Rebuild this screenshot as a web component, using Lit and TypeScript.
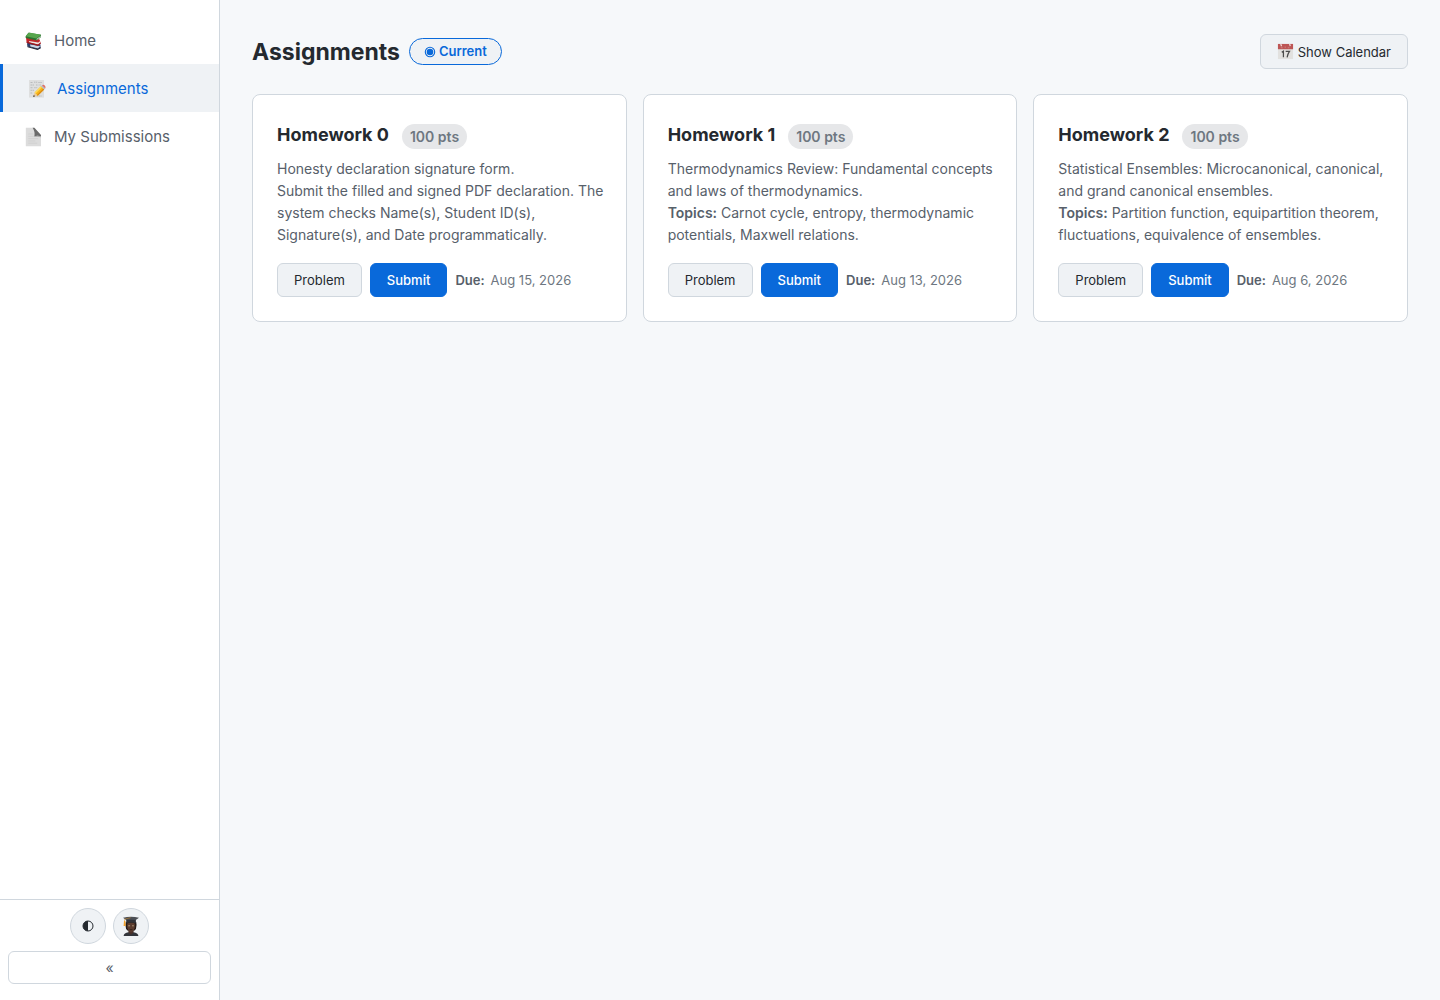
import { LitElement, html, css, svg, nothing } from "lit";
import { customElement, property } from "lit/decorators.js";

interface Assignment {
  title: string;
  points: number;
  summary: string;
  detail?: string;
  topics?: string;
  due: string;
}

const assignments: Assignment[] = [
  {
    title: "Homework 0",
    points: 100,
    summary: "Honesty declaration signature form.",
    detail:
      "Submit the filled and signed PDF declaration. The system checks Name(s), Student ID(s), Signature(s), and Date programmatically.",
    due: "Aug 15, 2026",
  },
  {
    title: "Homework 1",
    points: 100,
    summary: "Thermodynamics Review: Fundamental concepts and laws of thermodynamics.",
    topics: "Carnot cycle, entropy, thermodynamic potentials, Maxwell relations.",
    due: "Aug 13, 2026",
  },
  {
    title: "Homework 2",
    points: 100,
    summary: "Statistical Ensembles: Microcanonical, canonical, and grand canonical ensembles.",
    topics:
      "Partition function, equipartition theorem, fluctuations, equivalence of ensembles.",
    due: "Aug 6, 2026",
  },
];

const booksIcon = svg`
  <path d="M3 12.4 L5 11 L16.4 13.6 L16.6 17 L13.6 18.6 L3.4 15.6 Z" fill="#2c3f6e"/>
  <path d="M6 13.6 L16.2 15 L14 17.4 L6.4 15.4 Z" fill="#c9d3e2"/>
  <path d="M3.4 15.2 L13.6 17.8 L16.8 16.2 V17.2 L13.6 19 L3.6 16.2 Z" fill="#2b2b38"/>
  <path d="M2 6.6 L4 5.6 L15.6 8.4 L16.6 12 L14 14.4 L2.6 11.4 Z" fill="#c3262b"/>
  <path d="M5 10 L14.2 11.6 L16 10.2 L16.2 11.8 L14 13.4 L5.2 11.2 Z" fill="#eee3e1"/>
  <path d="M2.4 10.8 L14 13.6 L16.8 11.6 V12.7 L14 14.9 L2.8 12 Z" fill="#991a20"/>
  <path d="M1.6 5.4 L4.4 1.8 L17 3.8 L16.6 6.4 L12.6 9.6 L1.7 7 Z" fill="#2c7330"/>
  <path d="M1.6 5.2 L5 1.6 L17 3.8 L12.4 7.6 Z" fill="#57a64d"/>
  <path d="M12.6 8 L16.6 4.9 L16.4 6 L12.7 9 Z" fill="#d7e5d4"/>`;

const memoIcon = svg`
  <rect x="2" y="1" width="15" height="17.6" fill="#dedfdf"/>
  <path d="M3.5 3.5h2.5M7 3.2h3.2M11.3 3.5h3.5M3.5 6h4M9 6h2.4M12.4 6h2M3.5 8.7h2.6M7.2 8.7h3M3.5 11.3h3.6M3.5 14h2.2M9.5 17h5" stroke="#a9acae" stroke-width="0.7" fill="none" stroke-dasharray="1.5 0.5"/>
  <path d="M6.2 17.9 L7.6 13.6 L10.8 16.8 Z" fill="#eac998"/>
  <path d="M6 18.1 L6.8 15.9 L8.2 17.3 Z" fill="#3f3d3b"/>
  <path d="M7.6 13.6 L14 7.2 L17.2 10.4 L10.8 16.8 Z" fill="#f7b51c"/>
  <path d="M7.6 13.6 L14 7.2 L15 8.2 L8.6 14.6 Z" fill="#ffdc58"/>
  <path d="M9.9 15.9 L16.3 9.5 L17.2 10.4 L10.8 16.8 Z" fill="#d98a13"/>
  <path d="M14 7.2 L15 6.2 L18.2 9.4 L17.2 10.4 Z" fill="#b6babd"/>
  <path d="M15 6.2 Q16.4 5.2 17.8 6.5 Q19.1 8 18.2 9.4 Z" fill="#df6f66"/>`;

const pageIcon = svg`
  <path d="M1.8 0.8 H10.2 L17 8.6 V19.2 H1.8 Z" fill="#dcdcdc"/>
  <path d="M4.2 7h5M4.2 9.3h6M4.2 11.6h10M4.2 13.9h7M4.2 16.2h9" stroke="#cdcdcd" stroke-width="0.7"/>
  <path d="M8.6 0.8 H10.4 L17 8 V9.4 Q13.8 8 10.4 9.2 Q11.2 4.6 8.6 0.8 Z" fill="#6b6b6b"/>
  <path d="M10.4 9.2 Q13.8 8 17 9.4 V10.3 Q13.5 9.1 10.2 10.1 Z" fill="#a9a9a9"/>`;

const calendarIcon = svg`
  <rect x="1" y="1" width="16" height="16" fill="#e2e1df"/>
  <rect x="1" y="1" width="16" height="5.6" fill="#bd5555"/>
  <path d="M4 1 L4.8 3.4 M13.4 1 L14 3.4" stroke="#f1dedc" stroke-width="1.3"/>
  <path d="M4 5h2M8 4.4h1.6M11.4 5h1.8" stroke="#d08d8a" stroke-width="0.8"/>
  <path d="M5 9.7 L6.8 8.6 V15.2 M9.2 8.9 H13.2 Q11.3 11.6 10.7 15.2" stroke="#4b4b4b" stroke-width="1.3" fill="none"/>`;

const graduateIcon = svg`
  <path d="M2.6 20 Q3 16.6 7.4 16.2 H12.6 Q17 16.6 17.4 20 Z" fill="#32343a"/>
  <path d="M7.4 15 H12.6 V16.4 L10 18.8 L7.4 16.4 Z" fill="#4a3129"/>
  <path d="M4.8 6 Q4 9.6 5 12.4 Q5.8 14.4 7 14.8 H13 Q14.4 14.2 15 12.4 Q16 9 15.2 6 Z" fill="#241a17"/>
  <path d="M6.2 7.4 Q10 5.8 13.8 7.4 V11 Q13.4 14.9 10 16.4 Q6.6 14.9 6.2 11 Z" fill="#5a3b2e"/>
  <path d="M7.2 9.8 H9.1 M11 9.8 H12.9" stroke="#b19a7b" stroke-width="0.9"/>
  <path d="M8.6 13.4 Q10 14.2 11.4 13.4" stroke="#2b1a15" stroke-width="0.8" fill="none"/>
  <path d="M5.2 3 H14.9 V7.3 Q10 5.5 5.2 7.3 Z" fill="#303238"/>
  <path d="M2 1.7 Q10 -0.4 18 1.7 L14.8 4 Q10 3.3 5.2 4 Z" fill="#4c4f55"/>
  <path d="M9.6 1.7 L4.1 3 Q3.5 3.3 3.6 5.4" stroke="#c98a2c" stroke-width="0.6" fill="none"/>
  <path d="M3 5 H4.4 L4.7 10 H2.6 Z" fill="#f2a12c"/>`;

const contrastIcon = svg`
  <circle cx="6" cy="6" r="5" fill="none" stroke="#24292f" stroke-width="1"/>
  <path d="M6 1 A5 5 0 0 0 6 11 Z" fill="#24292f"/>`;

const targetIcon = svg`
  <circle cx="6" cy="6" r="4.7" fill="none" stroke="#0969da" stroke-width="1.1"/>
  <circle cx="6" cy="6" r="3.3" fill="#0969da"/>`;

const reset = css`
  * {
    box-sizing: border-box;
  }
  button,
  a {
    font-family: inherit;
    color: inherit;
    text-decoration: none;
  }
  button {
    margin: 0;
    cursor: pointer;
  }
  svg {
    display: block;
    flex: none;
  }
  .button {
    display: inline-flex;
    align-items: center;
    justify-content: center;
    gap: 4px;
    padding: 8px 16px;
    border: 1px solid #d0d7de;
    border-radius: 6px;
    background: #eff2f5;
    color: #24292f;
    font-size: 13px;
    line-height: 16px;
    white-space: nowrap;
  }
  .primary {
    border-color: #0969da;
    background: #0969da;
    color: #ffffff;
    font-weight: 500;
  }
`;

@customElement("app-sidebar")
export class AppSidebar extends LitElement {
  static styles = [
    reset,
    css`
      :host {
        display: flex;
        flex-direction: column;
        background: #ffffff;
        border-right: 1px solid #d0d7de;
      }
      .nav {
        display: flex;
        flex-direction: column;
        padding-top: 16px;
      }
      .item {
        display: flex;
        align-items: center;
        gap: 10px;
        padding: 13px 24px 11px;
        color: #57606a;
        font-size: 15px;
        line-height: 24px;
      }
      .active {
        border-left: 3px solid #0969da;
        background: #eff2f5;
        color: #0969da;
      }
      .footer {
        display: flex;
        flex-direction: column;
        gap: 7px;
        margin-top: auto;
        padding: 8px 8px 16px;
        border-top: 1px solid #d0d7de;
      }
      .tools {
        display: flex;
        justify-content: center;
        gap: 7px;
      }
      .round {
        display: flex;
        align-items: center;
        justify-content: center;
        width: 36px;
        height: 36px;
        padding: 0;
        border: 1px solid #d0d7de;
        border-radius: 50%;
        background: #eff2f5;
      }
      .collapse {
        padding: 7px;
        border: 1px solid #d0d7de;
        border-radius: 6px;
        background: #ffffff;
        color: #57606a;
        font-size: 14px;
        line-height: 17px;
      }
    `,
  ];

  render() {
    return html`
      <nav class="nav">
        <a class="item" href="#home">
          <svg width="20" height="20" viewBox="0 0 20 20" aria-hidden="true">${booksIcon}</svg>Home
        </a>
        <a class="item active" href="#assignments" aria-current="page">
          <svg width="20" height="20" viewBox="0 0 20 20" aria-hidden="true">${memoIcon}</svg>Assignments
        </a>
        <a class="item" href="#submissions">
          <svg width="20" height="20" viewBox="0 0 20 20" aria-hidden="true">${pageIcon}</svg>My Submissions
        </a>
      </nav>
      <div class="footer">
        <div class="tools">
          <button class="round" aria-label="Theme">
            <svg width="12" height="12" viewBox="0 0 12 12">${contrastIcon}</svg>
          </button>
          <button class="round" aria-label="Account">
            <svg width="20" height="20" viewBox="0 0 20 20">${graduateIcon}</svg>
          </button>
        </div>
        <button class="collapse" aria-label="Collapse">«</button>
      </div>
    `;
  }
}

@customElement("assignment-card")
export class AssignmentCard extends LitElement {
  @property({ attribute: false }) assignment!: Assignment;

  static styles = [
    reset,
    css`
      :host {
        display: flex;
        flex-direction: column;
        box-sizing: border-box;
        padding: 29px 16px 24px 24px;
        border: 1px solid #d0d7de;
        border-radius: 8px;
        background: #ffffff;
      }
      .head {
        display: flex;
        align-items: flex-start;
        gap: 13px;
        margin-bottom: 9px;
      }
      .title {
        margin: 0;
        color: #24292f;
        font-size: 18px;
        font-weight: 700;
        line-height: 22px;
      }
      .points {
        padding: 3px 8px;
        border-radius: 13px;
        background: #e6e7e9;
        color: #6e7781;
        font-size: 14px;
        font-weight: 600;
        line-height: 19px;
      }
      .text {
        margin: 0 0 17px;
        color: #57606a;
        font-size: 14px;
        line-height: 22px;
      }
      .actions {
        display: flex;
        align-items: center;
        gap: 8px;
        margin-top: auto;
      }
      .due {
        display: flex;
        gap: 6px;
        color: #6e7781;
        font-size: 13px;
        line-height: 18px;
      }
      .label {
        color: #57606a;
        font-weight: 600;
      }
    `,
  ];

  render() {
    const a = this.assignment;
    return html`
      <div class="head">
        <h2 class="title">${a.title}</h2>
        <span class="points">${a.points} pts</span>
      </div>
      <p class="text">
        ${a.summary}<br />${a.detail ?? nothing}${a.topics
          ? html`<strong class="label">Topics:</strong> ${a.topics}`
          : nothing}
      </p>
      <div class="actions">
        <a class="button" href="#problem">Problem</a>
        <button class="button primary">Submit</button>
        <span class="due"><span class="label">Due:</span><span>${a.due}</span></span>
      </div>
    `;
  }
}

@customElement("app-root")
export class AppRoot extends LitElement {
  static styles = [
    reset,
    css`
      :host {
        display: grid;
        grid-template-columns: 220px minmax(0, 1fr);
        min-height: 100vh;
        background: #f6f8fa;
        color: #24292f;
        font-family: Inter, "Liberation Sans", sans-serif;
      }
      .main {
        padding: 34px 32px 32px;
      }
      .header {
        display: flex;
        align-items: center;
        gap: 9px;
        margin-bottom: 25px;
      }
      .heading {
        margin: 0;
        font-size: 23px;
        font-weight: 700;
        line-height: 32px;
      }
      .filter {
        display: flex;
        align-items: center;
        gap: 3px;
        padding: 4px 14px;
        border: 1px solid #0969da;
        border-radius: 14px;
        background: #eff2f5;
        color: #0969da;
        font-size: 13px;
        font-weight: 600;
        line-height: 17px;
      }
      .calendar {
        margin-left: auto;
      }
      .cards {
        display: grid;
        grid-template-columns: repeat(auto-fill, minmax(340px, 1fr));
        gap: 16px;
      }
    `,
  ];

  render() {
    return html`
      <app-sidebar></app-sidebar>
      <main class="main">
        <header class="header">
          <h1 class="heading">Assignments</h1>
          <button class="filter">
            <svg width="12" height="12" viewBox="0 0 12 12" aria-hidden="true">${targetIcon}</svg>Current
          </button>
          <button class="button calendar">
            <svg width="17" height="17" viewBox="0 0 18 18" aria-hidden="true">${calendarIcon}</svg>Show Calendar
          </button>
        </header>
        <section class="cards">
          ${assignments.map(
            (a) => html`<assignment-card .assignment=${a}></assignment-card>`,
          )}
        </section>
      </main>
    `;
  }
}
